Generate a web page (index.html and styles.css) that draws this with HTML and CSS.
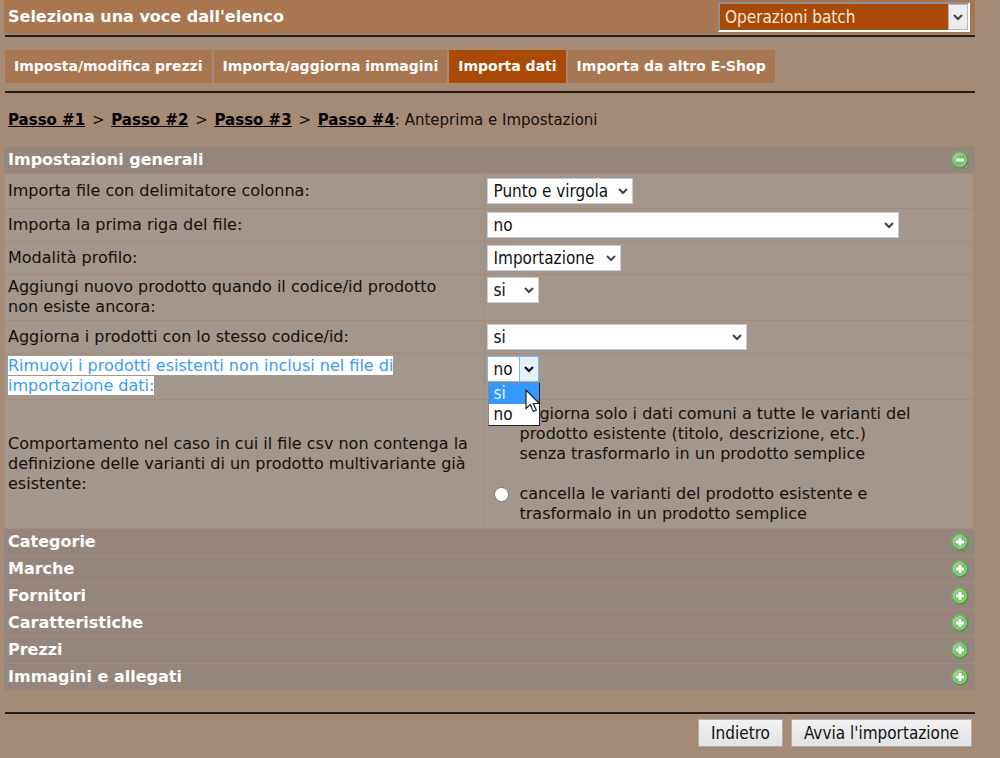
FILE: index.html
```html
<!DOCTYPE html>
<html lang="it">
<head>
<meta charset="utf-8">
<title>Importa dati</title>
<link rel="stylesheet" href="styles.css">
</head>
<body>
<svg class="defs" aria-hidden="true">
  <defs>
    <linearGradient id="rim" x1="0" y1="0" x2="1" y2="1">
      <stop offset="0" stop-color="#86c47a"/>
      <stop offset="1" stop-color="#3c8a33"/>
    </linearGradient>
    <linearGradient id="green" x1="0" y1="0" x2="1" y2="1">
      <stop offset="0" stop-color="#a5dc98"/>
      <stop offset="0.5" stop-color="#6cbb5e"/>
      <stop offset="1" stop-color="#86cf74"/>
    </linearGradient>
    <symbol id="ball" viewBox="0 0 18 18">
      <path d="M6 .6h6L17.400 6v6L12 17.400H6L.6 12V6z" fill="url(#rim)"/>
      <circle cx="9" cy="9" r="6.600" fill="url(#green)"/>
      <circle cx="9" cy="9" r="6.300" fill="none" stroke="#c3eab8" stroke-opacity=".65" stroke-width=".9"/>
    </symbol>
    <symbol id="minus" viewBox="0 0 18 18">
      <use href="#ball"/>
      <rect x="5" y="7.500" width="8" height="3" rx=".6" fill="#fff"/>
    </symbol>
    <symbol id="plus" viewBox="0 0 18 18">
      <use href="#ball"/>
      <path d="M7.500 5h3v2.500H13v3h-2.500V13h-3v-2.500H5v-3h2.500z" fill="#fff"/>
    </symbol>
  </defs>
</svg>
<main class="page">
  <header class="topbar">
    <label class="topbar-title" for="op">Seleziona una voce dall'elenco</label>
    <select id="op" class="op-select"><option>Operazioni batch</option></select>
  </header>
  <nav class="tabs">
    <a class="tab" href="#">Imposta/modifica prezzi</a>
    <a class="tab" href="#">Importa/aggiorna immagini</a>
    <a class="tab tab-active" href="#">Importa dati</a>
    <a class="tab" href="#">Importa da altro E-Shop</a>
  </nav>
  <p class="steps"><a href="#">Passo #1</a> <span class="sep">&gt;</span> <a href="#">Passo #2</a> <span class="sep">&gt;</span> <a href="#">Passo #3</a> <span class="sep">&gt;</span> <a href="#">Passo #4</a>: Anteprima e Impostazioni</p>

  <section class="panels">
    <h2 class="panel-head">Impostazioni generali <button class="toggle" type="button" aria-label="Chiudi Impostazioni generali"><svg><use href="#minus"/></svg></button></h2>
    <div class="row row-tall">
      <label class="cell" for="s1">Importa file con delimitatore colonna:</label>
      <div class="cell field"><select id="s1" class="sel w-delim"><option>Punto e virgola</option></select></div>
    </div>
    <div class="row">
      <label class="cell" for="s2">Importa la prima riga del file:</label>
      <div class="cell field"><select id="s2" class="sel w-long"><option>no</option></select></div>
    </div>
    <div class="row">
      <label class="cell" for="s3">Modalità profilo:</label>
      <div class="cell field"><select id="s3" class="sel w-mode"><option>Importazione</option></select></div>
    </div>
    <div class="row row-double">
      <label class="cell" for="s4">Aggiungi nuovo prodotto quando il codice/id prodotto non esiste ancora:</label>
      <div class="cell field"><select id="s4" class="sel w-short"><option>si</option></select></div>
    </div>
    <div class="row">
      <label class="cell" for="s5">Aggiorna i prodotti con lo stesso codice/id:</label>
      <div class="cell field"><select id="s5" class="sel w-mid"><option>si</option></select></div>
    </div>
    <div class="row row-double">
      <label class="cell" for="s6"><span><mark class="marked">Rimuovi i prodotti esistenti non inclusi nel file di importazione dati:</mark></span></label>
      <div class="cell field">
        <div class="combo">
          <select id="s6" class="sel w-short sel-open"><option>no</option><option>si</option></select>
          <ul class="menu" role="listbox" aria-label="Rimuovi i prodotti">
            <li class="menu-item menu-hover" role="option" aria-selected="true">si</li>
            <li class="menu-item" role="option" aria-selected="false">no</li>
          </ul>
          <svg class="pointer" viewBox="0 0 16 24" aria-hidden="true"><path d="M1 1v18.500l4.300-4 3 7 3-1.300-3-6.700h6z" fill="#fff" stroke="#222" stroke-width="1.200"/></svg>
        </div>
      </div>
    </div>
    <div class="row row-variants">
      <div class="cell" id="var-label">Comportamento nel caso in cui il file csv non contenga la definizione delle varianti di un prodotto multivariante già esistente:</div>
      <div class="cell choices" role="radiogroup" aria-labelledby="var-label">
        <label class="choice"><input class="radio" type="radio" name="v"><span>aggiorna solo i dati comuni a tutte le varianti del prodotto esistente (titolo, descrizione, etc.)<br>senza trasformarlo in un prodotto semplice</span></label>
        <label class="choice"><input class="radio" type="radio" name="v"><span>cancella le varianti del prodotto esistente e trasformalo in un prodotto semplice</span></label>
      </div>
    </div>
    <h2 class="panel-head">Categorie <button class="toggle" type="button" aria-label="Apri Categorie"><svg><use href="#plus"/></svg></button></h2>
    <h2 class="panel-head">Marche <button class="toggle" type="button" aria-label="Apri Marche"><svg><use href="#plus"/></svg></button></h2>
    <h2 class="panel-head">Fornitori <button class="toggle" type="button" aria-label="Apri Fornitori"><svg><use href="#plus"/></svg></button></h2>
    <h2 class="panel-head">Caratteristiche <button class="toggle" type="button" aria-label="Apri Caratteristiche"><svg><use href="#plus"/></svg></button></h2>
    <h2 class="panel-head">Prezzi <button class="toggle" type="button" aria-label="Apri Prezzi"><svg><use href="#plus"/></svg></button></h2>
    <h2 class="panel-head">Immagini e allegati <button class="toggle" type="button" aria-label="Apri Immagini e allegati"><svg><use href="#plus"/></svg></button></h2>
  </section>

  <footer class="actions">
    <button class="btn" type="button">Indietro</button>
    <button class="btn" type="button">Avvia l'importazione</button>
  </footer>
</main>
</body>
</html>
```

FILE: styles.css
```css
* { box-sizing: border-box; }

body {
  margin: 0;
  background: #a58a76;
  color: #16110e;
  font: 16px/20px "DejaVu Sans", Verdana, sans-serif;
}

.defs { position: absolute; width: 0; height: 0; }

.page { padding: 0 25px 0 4px; }

.topbar {
  display: flex;
  align-items: center;
  justify-content: space-between;
  height: 34px;
  padding: 0 5px 0 4px;
  background: #a87650;
}

.topbar-title { color: #fff; font-weight: bold; }

.op-select {
  appearance: none;
  width: 252px;
  height: 30px;
  padding: 0 28px 0 5px;
  border: 2px solid;
  border-color: #8d8f94 #fff #fff #8d8f94;
  border-radius: 0;
  background: #a94a06 url("data:image/svg+xml,%3Csvg xmlns='http://www.w3.org/2000/svg' width='20' height='26'%3E%3Crect x='.5' y='.5' width='19' height='25' fill='%23ececec' stroke='%23b4b8bc'/%3E%3Cpath d='M6 11l4 4 4-4' fill='none' stroke='%23444' stroke-width='2'/%3E%3C/svg%3E") no-repeat right center;
  color: #fbe9dc;
  font: 17px "DejaVu Sans Condensed", "DejaVu Sans", sans-serif;
}

.tabs {
  display: flex;
  gap: 2px;
  margin: 1px 0 0 1px;
  padding: 13px 0 8px;
  border: solid #241c18;
  border-width: 2px 0;
}

.tab {
  padding: 7px 9px;
  background: #a87650;
  color: #fff;
  font-size: 14px;
  line-height: 19px;
  font-weight: bold;
  text-decoration: none;
}

.tab-active { background: #a94a06; }

.steps { margin: 0; padding: 17px 4px; font-size: 15px; }
.steps a { color: #000; font-weight: bold; }
.sep { margin: 0 2px; }

.panels { display: grid; gap: 1px; }

.panel-head {
  display: flex;
  align-items: center;
  justify-content: space-between;
  height: 26px;
  margin: 0;
  padding: 0 6px 0 4px;
  background: #94867c;
  color: #fff;
  font-size: 16px;
  line-height: 26px;
}

.toggle {
  width: 18px;
  height: 18px;
  padding: 0;
  border: 0;
  background: none;
}

.toggle svg { display: block; width: 18px; height: 18px; }

.row {
  display: grid;
  grid-template-columns: 479fr 487fr;
  gap: 1px;
  min-height: 32px;
  margin: 0 2px 0 1px;
}

.row-tall { min-height: 34px; }
.row-double { min-height: 45px; }
.row-variants { min-height: 128px; }

.cell {
  display: flex;
  align-items: center;
  padding: 0 14px 0 3px;
  background: #a3968c;
}

.field { padding: 0 2px; }

.row-double .cell { align-items: flex-start; padding-top: 2px; }

.marked { background: #fff; color: #3b9bf8; }

.sel {
  appearance: none;
  height: 26px;
  padding: 0 24px 0 5px;
  border: 1px solid #c6ccd6;
  border-radius: 0;
  background: #fff url("data:image/svg+xml,%3Csvg xmlns='http://www.w3.org/2000/svg' width='18' height='24'%3E%3Cpath d='M5 10l4 4 4-4' fill='none' stroke='%23444' stroke-width='2'/%3E%3C/svg%3E") no-repeat right center;
  color: #111;
  font: 17px "DejaVu Sans Condensed", "DejaVu Sans", sans-serif;
}

.w-delim { width: 146px; }
.w-long { width: 412px; }
.w-mode { width: 134px; }
.w-mid { width: 260px; }
.w-short { width: 52px; }

.sel-open {
  padding-right: 19px;
  border-color: #7eb4ea;
  background-image: url("data:image/svg+xml,%3Csvg xmlns='http://www.w3.org/2000/svg' width='19' height='24'%3E%3Crect width='19' height='24' fill='%23e5f0fb'/%3E%3Cpath d='M.5 0v24' stroke='%237eb4ea'/%3E%3Cpath d='M6 10l4 4 4-4' fill='none' stroke='%23000' stroke-width='2'/%3E%3C/svg%3E");
}

.combo { position: relative; display: flex; }

.menu {
  position: absolute;
  z-index: 1;
  top: 26px;
  left: 1px;
  width: 52px;
  margin: 0;
  padding: 0;
  border: 1px solid #222;
  border-top-color: #888;
  border-left-color: #888;
  background: #fff;
  list-style: none;
}

.menu-item {
  padding: 0 4px;
  font: 17px/21px "DejaVu Sans Condensed", "DejaVu Sans", sans-serif;
}

.menu-hover { background: #3399ff; color: #e8f3ff; }

.pointer {
  position: absolute;
  z-index: 2;
  top: 33px;
  left: 38px;
  width: 16px;
  height: 24px;
}

.choices {
  flex-direction: column;
  align-items: stretch;
  gap: 20px;
  padding: 4px 40px 4px 9px;
}

.choice { display: flex; align-items: flex-start; gap: 10px; }

.radio {
  appearance: none;
  flex: none;
  width: 15px;
  height: 15px;
  margin: 3px 0 0;
  border: 1px solid #777;
  border-radius: 50%;
  background: #fff;
}

.actions {
  display: flex;
  justify-content: flex-end;
  gap: 8px;
  margin: 22px 0 0 1px;
  padding: 5px 3px 10px 0;
  border-top: 2px solid #241c18;
}

.btn {
  height: 28px;
  padding: 0 12px;
  border: 1px solid #adadad;
  background: linear-gradient(#f2f2f2, #e2e2e2);
  color: #111;
  font: 17px "DejaVu Sans Condensed", "DejaVu Sans", sans-serif;
}
```
